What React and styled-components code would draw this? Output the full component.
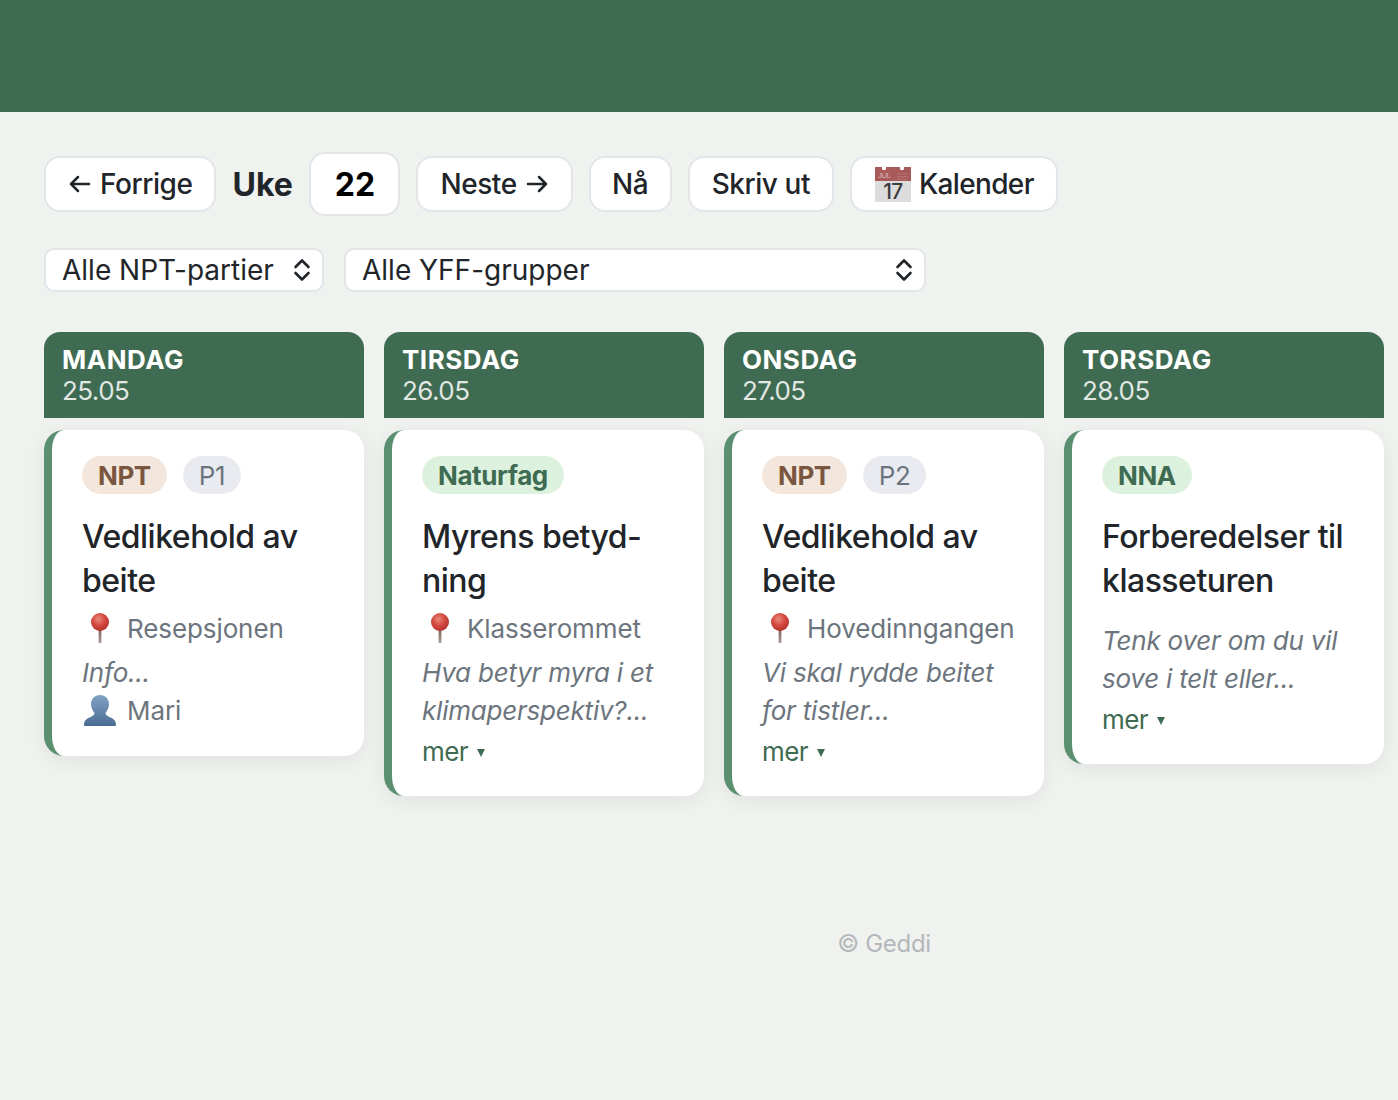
import React from "react";
import styled, { createGlobalStyle } from "styled-components";

const Global = createGlobalStyle`
  html, body { margin: 0; padding: 0; background: #f0f2ef; overflow-x: hidden; }
  body { font-family: Inter, "Liberation Sans", sans-serif; color: #212529; }
  * { box-sizing: border-box; }
`;

const Page = styled.div`
  width: 1768px;
  min-height: 1100px;
  background: #f0f2ef;
`;
const TopBar = styled.header`
  height: 112px;
  background: #3f6b52;
  width: 1398px;
`;
const Main = styled.main`
  padding: 40px 44px 0;
`;
const Toolbar = styled.div`
  display: flex;
  align-items: center;
  gap: 16px;
  height: 64px;
`;
const Button = styled.button`
  display: inline-flex;
  align-items: center;
  justify-content: center;
  gap: ${(p) => p.$gap ?? 8}px;
  ${(p) => (p.$w ? `width: ${p.$w}px;` : "")}
  height: 56px;
  padding: 0 22px;
  background: #fff;
  border: 2px solid #e2e5ea;
  border-radius: 16px;
  font: 500 28px Inter, sans-serif;
  letter-spacing: ${(p) => p.$ls ?? -0.45}px;
  color: #212529;
`;
const WeekGroup = styled.div`
  display: flex;
  align-items: center;
  gap: 16px;
`;
const WeekLabel = styled.span`
  min-width: 61px;
  font-size: 32px;
  font-weight: 700;
  color: #212529;
`;
const WeekInput = styled.div`
  width: 91px;
  height: 64px;
  display: flex;
  align-items: center;
  justify-content: center;
  background: #fff;
  border: 2px solid #e2e5ea;
  border-radius: 16px;
  font-size: 32px;
  font-weight: 700;
  color: #000;
`;
const Filters = styled.div`
  display: flex;
  gap: 20px;
  margin-top: 32px;
`;
const Select = styled.div`
  width: ${(p) => p.$w}px;
  height: 44px;
  display: flex;
  align-items: center;
  justify-content: space-between;
  padding: 0 11px 0 16px;
  background: #fff;
  border: 2px solid #e2e5ea;
  border-radius: 10px;
  font-size: 28px;
  color: #212529;
`;
const Grid = styled.div`
  display: grid;
  grid-template-columns: repeat(4, 320px);
  gap: 20px;
  align-items: start;
  margin-top: 40px;
`;
const Column = styled.section`
  display: flex;
  flex-direction: column;
  gap: 12px;
`;
const DayHead = styled.div`
  height: 86px;
  padding: 12px 18px 0;
  background: #3f6b52;
  color: #fff;
  border-radius: 16px 16px 0 0;
  font-size: 26px;
`;
const DayName = styled.div`
  font-weight: 700;
  line-height: 31px;
  letter-spacing: 0.5px;
  text-transform: uppercase;
`;
const DayDate = styled.div`
  line-height: 32px;
  letter-spacing: -0.55px;
  color: rgba(255, 255, 255, 0.85);
`;
const Card = styled.article`
  background: #fff;
  border-left: 8px solid #5a9070;
  border-radius: 20px;
  padding: 26px 20px 0 30px;
  height: ${(p) => p.$h}px;
  box-shadow: 0 4px 20px rgba(0, 0, 0, 0.07);
`;
const Badges = styled.div`
  display: flex;
  gap: 16px;
`;
const Badge = styled.span`
  height: 38px;
  padding: 0 16px;
  display: inline-flex;
  align-items: center;
  border-radius: 19px;
  font-size: 26px;
  font-weight: ${(p) => (p.$plain ? 400 : 700)};
  letter-spacing: ${(p) => (p.$plain ? -0.5 : -0.4)}px;
  background: ${(p) => p.$bg};
  color: ${(p) => p.$fg};
`;
const Title = styled.h3`
  margin: 21px 0 0;
  font-size: 32px;
  line-height: 44px;
  font-weight: 500;
  letter-spacing: -0.5px;
  color: #212529;
`;
const Meta = styled.div`
  display: flex;
  align-items: center;
  gap: 9px;
  height: 38px;
  padding-bottom: 2px;
  font-size: 26px;
  letter-spacing: -0.1px;
  color: #6c757d;
  margin-top: ${(p) => p.$mt || 0}px;
`;
const IconSlot = styled.span`
  width: 36px;
  display: inline-flex;
  justify-content: center;
`;
const Desc = styled.p`
  margin: ${(p) => p.$mt}px 0 0;
  font-size: 26px;
  line-height: 38px;
  font-style: italic;
  letter-spacing: -0.22px;
  color: #6c757d;
`;
const More = styled.div`
  display: flex;
  align-items: center;
  gap: 9px;
  margin-top: 3px;
  font-size: 26px;
  line-height: 38px;
  letter-spacing: -0.6px;
  color: #3f6b52;
`;
const Caret = styled.span`
  width: 0;
  height: 0;
  margin-top: 2px;
  border-left: 4px solid transparent;
  border-right: 4px solid transparent;
  border-top: 8px solid #3f6b52;
`;
const Footer = styled.footer`
  text-align: center;
  margin-top: 132px;
  font-size: 24px;
  line-height: 32px;
  letter-spacing: -0.3px;
  color: #b4b8ba;
`;

const Arrow = ({ left }) => (
  <svg width="24" height="24" viewBox="0 0 24 24" fill="none" stroke="#212529" strokeWidth="2.500" strokeLinecap="round" strokeLinejoin="round" style={left ? { transform: "scaleX(-1)" } : undefined}>
    <path d="M3 12h18M14 5l7 7-7 7" />
  </svg>
);

const Chevrons = () => (
  <svg width="18" height="24" viewBox="0 0 18 24" fill="none" stroke="#212529" strokeWidth="2.600" strokeLinecap="round" strokeLinejoin="round">
    <path d="M2.500 9 9 2.500 15.500 9M2.500 15 9 21.500 15.500 15" />
  </svg>
);

const CalendarIcon = () => (
  <svg width="38" height="38" viewBox="0 0 38 38" style={{ overflow: "visible" }}>
    <rect x="1" y="2" width="36" height="35" fill="#dcdcdc" />
    <rect x="1" y="2" width="36" height="14" fill="#a85a5a" />
    <circle cx="10" cy="3" r="2.200" fill="#fff" />
    <circle cx="28" cy="3" r="2.200" fill="#fff" />
    <text x="4" y="13" fontSize="8" fill="#dcb4b4" fontFamily="Liberation Sans">JUL</text>
    <path d="M23 9h11M23 11.500h11M23 14h11" stroke="#b67272" strokeWidth="1" />
    <text x="19" y="34" textAnchor="middle" fontSize="21" fill="#3c3c3c" fontFamily="Inter">17</text>
  </svg>
);

const PinIcon = () => (
  <svg width="22" height="32" viewBox="0 0 22 32">
    <defs>
      <radialGradient id="pinBall" cx="0.42" cy="0.35" r="0.72">
        <stop offset="0" stopColor="#e88a78" />
        <stop offset="0.5" stopColor="#d4483f" />
        <stop offset="1" stopColor="#ae302c" />
      </radialGradient>
      <linearGradient id="pinStem" x1="0" y1="0" x2="0" y2="1">
        <stop offset="0" stopColor="#7a5a52" />
        <stop offset="1" stopColor="#a89c94" />
      </linearGradient>
    </defs>
    <rect x="9.600" y="15" width="2.800" height="16" fill="url(#pinStem)" />
    <circle cx="11" cy="10" r="9" fill="url(#pinBall)" />
  </svg>
);

const PersonIcon = () => (
  <svg width="34" height="33" viewBox="0 0 34 33">
    <defs>
      <linearGradient id="bust" x1="0" y1="0" x2="0" y2="1">
        <stop offset="0" stopColor="#82a2c4" />
        <stop offset="1" stopColor="#4a6c94" />
      </linearGradient>
    </defs>
    <path fill="url(#bust)" d="M17 1c5.500 0 9 4 9 9.500 0 3.500-2 6.500-3.500 8.500 0 2 2 3 5 4.500 3.500 1.500 5.500 3 5.500 8.500H1c0-5.500 2-7 5.500-8.500 3-1.500 5-2.500 5-4.500C10 17 8 14 8 10.500 8 5 11.500 1 17 1z" />
  </svg>
);

const npt = { bg: "#f3e6dc", fg: "#7a5640" };
const nat = { bg: "#ddf1df", fg: "#3f6b52" };
const per = { bg: "#e9ebf0", fg: "#6c757d" };

const days = [
  { name: "Mandag", date: "25.05", h: 326, badges: [["NPT", npt], ["P1", per, true]], title: ["Vedlikehold av", "beite"], place: "Resepsjonen", desc: ["Info..."], person: "Mari" },
  { name: "Tirsdag", date: "26.05", h: 366, badges: [["Naturfag", nat]], title: ["Myrens betyd-", "ning"], place: "Klasserommet", desc: ["Hva betyr myra i et", "klimaperspektiv?..."], more: true },
  { name: "Onsdag", date: "27.05", h: 366, badges: [["NPT", npt], ["P2", per, true]], title: ["Vedlikehold av", "beite"], place: "Hovedinngangen", desc: ["Vi skal rydde beitet", "for tistler..."], more: true },
  { name: "Torsdag", date: "28.05", h: 334, badges: [["NNA", nat]], title: ["Forberedelser til", "klasseturen"], desc: ["Tenk over om du vil", "sove i telt eller..."], more: true },
];

export default function App() {
  return (
    <Page>
      <Global />
      <TopBar />
      <Main>
        <Toolbar>
          <Button><Arrow left /> Forrige</Button>
          <WeekGroup>
            <WeekLabel>Uke</WeekLabel>
            <WeekInput>22</WeekInput>
          </WeekGroup>
          <Button>Neste <Arrow /></Button>
          <Button $w={83}>Nå</Button>
          <Button>Skriv ut</Button>
          <Button $gap={7} $ls={-0.65}><CalendarIcon /> Kalender</Button>
        </Toolbar>
        <Filters>
          <Select $w={280}>Alle NPT-partier <Chevrons /></Select>
          <Select $w={582}>Alle YFF-grupper <Chevrons /></Select>
        </Filters>
        <Grid>
          {days.map((d) => (
            <Column key={d.name}>
              <DayHead>
                <DayName>{d.name}</DayName>
                <DayDate>{d.date}</DayDate>
              </DayHead>
              <Card $h={d.h}>
                <Badges>
                  {d.badges.map(([label, c, plain]) => (
                    <Badge key={label} $bg={c.bg} $fg={c.fg} $plain={plain}>{label}</Badge>
                  ))}
                </Badges>
                <Title>{d.title[0]}<br />{d.title[1]}</Title>
                {d.place && (
                  <Meta $mt={7}><IconSlot><PinIcon /></IconSlot>{d.place}</Meta>
                )}
                <Desc $mt={d.place ? 6 : 19}>
                  {d.desc.map((l, i) => (
                    <React.Fragment key={l}>{i > 0 && <br />}{l}</React.Fragment>
                  ))}
                </Desc>
                {d.person && <Meta><IconSlot><PersonIcon /></IconSlot>{d.person}</Meta>}
                {d.more && <More>mer <Caret /></More>}
              </Card>
            </Column>
          ))}
        </Grid>
        <Footer>© Geddi</Footer>
      </Main>
    </Page>
  );
}
